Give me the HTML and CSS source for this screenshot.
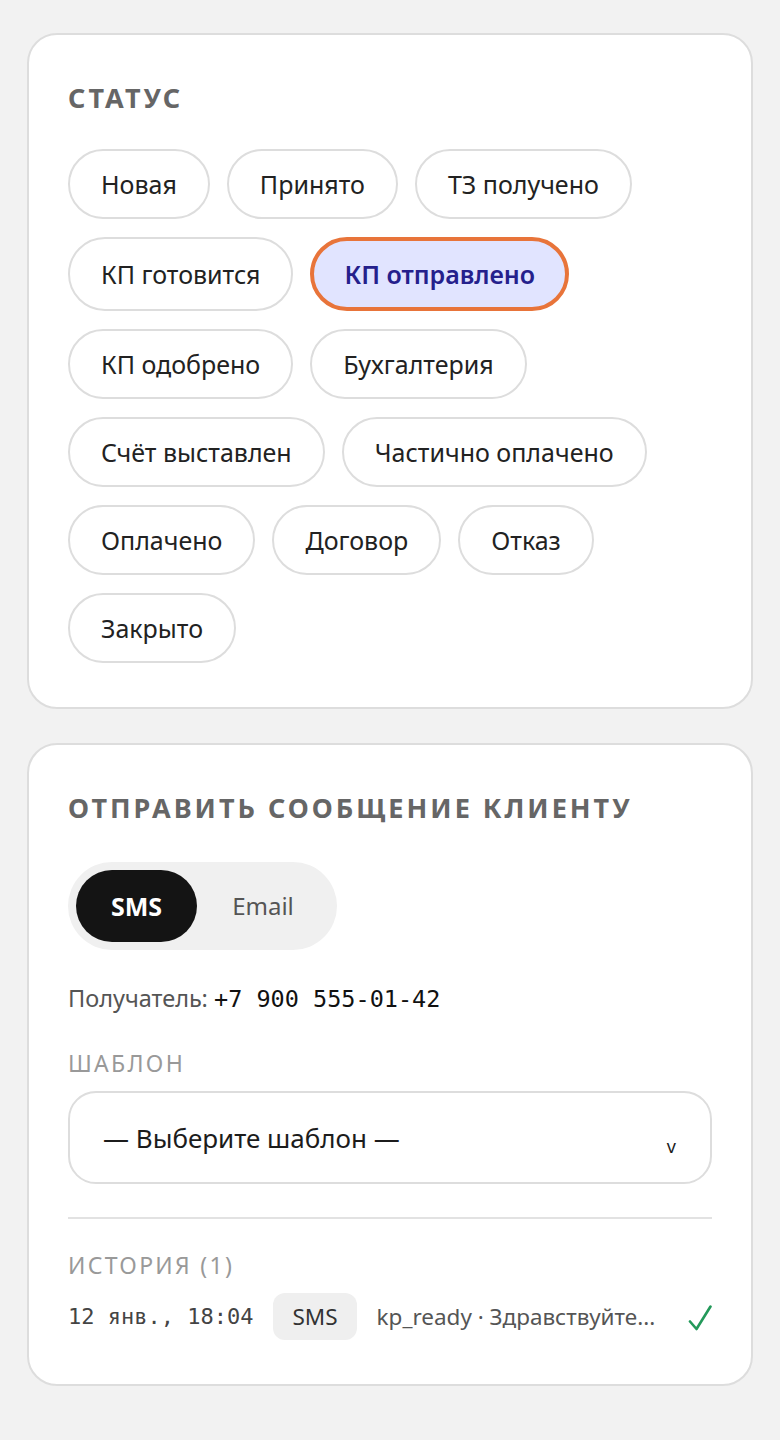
FILE: index.html
```html
<!DOCTYPE html>
<html lang="ru">
<head>
<meta charset="utf-8">
<title>Заявка</title>
<link rel="stylesheet" href="styles.css">
</head>
<body>
<main class="page">
  <section class="card">
    <h2 class="card-title">Статус</h2>
    <div class="chips">
      <button class="chip">Новая</button>
      <button class="chip">Принято</button>
      <button class="chip">ТЗ получено</button>
      <button class="chip">КП готовится</button>
      <button class="chip chip-active">КП отправлено</button>
      <button class="chip">КП одобрено</button>
      <button class="chip">Бухгалтерия</button>
      <button class="chip">Счёт выставлен</button>
      <button class="chip">Частично оплачено</button>
      <button class="chip">Оплачено</button>
      <button class="chip">Договор</button>
      <button class="chip">Отказ</button>
      <button class="chip">Закрыто</button>
    </div>
  </section>

  <section class="card">
    <h2 class="card-title">Отправить сообщение клиенту</h2>
    <div class="segmented">
      <button class="seg seg-on">SMS</button>
      <button class="seg">Email</button>
    </div>
    <p class="recipient">Получатель: <span class="mono phone">+7 900 555-01-42</span></p>
    <div class="field-label field-label-first">Шаблон</div>
    <div class="select">
      <span class="select-text">— Выберите шаблон —</span>
      <span class="select-caret">v</span>
    </div>
    <hr class="divider">
    <div class="field-label">История (1)</div>
    <div class="history-row">
      <span class="mono history-date">12 янв., 18:04</span>
      <span class="tag">SMS</span>
      <span class="history-text">kp_ready · Здравствуйте...</span>
      <svg class="history-ok" width="24" height="26" viewBox="0 0 24 26" aria-label="Доставлено">
        <path d="M2 16.5 L8.5 24 L22.5 1.5" fill="none" stroke="#23995a" stroke-width="2.6" stroke-linecap="round" stroke-linejoin="round"/>
      </svg>
    </div>
  </section>
</main>
</body>
</html>
```

FILE: styles.css
```css
html, body {
  margin: 0;
  padding: 0;
  background: #f2f2f2;
}

body {
  font-family: "Noto Sans", "Open Sans", sans-serif;
  color: #1c1c1c;
}

.page {
  display: flex;
  flex-direction: column;
  gap: 34px;
  padding: 33px 27px;
}

.card {
  display: flex;
  flex-direction: column;
  background: #ffffff;
  border: 2px solid #dddddd;
  border-radius: 30px;
  padding: 45px 39px 44px;
}

.card-title {
  margin: 0 0 33px;
  font-size: 27px;
  line-height: 36px;
  font-weight: 700;
  letter-spacing: 3px;
  text-transform: uppercase;
  color: #666666;
}

/* status chips */
.chips {
  display: flex;
  flex-wrap: wrap;
  gap: 18px 17px;
}

.chip {
  font-family: inherit;
  font-size: 25px;
  line-height: 32px;
  color: #222222;
  background: #ffffff;
  border: 2px solid #dddddd;
  border-radius: 999px;
  padding: 17px 31px;
  cursor: pointer;
}

.chip-active {
  background: #e1e4ff;
  border: 4px solid #e8743a;
  padding: 17px 30px;
  color: #25208c;
  font-weight: 600;
}

/* channel switch */
.segmented {
  display: inline-flex;
  align-self: flex-start;
  background: #f0f0f0;
  border-radius: 999px;
  padding: 8px;
  margin-top: 3px;
}

.seg {
  font-family: inherit;
  font-size: 24px;
  line-height: 32px;
  border: none;
  background: transparent;
  color: #555555;
  border-radius: 999px;
  padding: 20px 35px;
  cursor: pointer;
}

.seg-on {
  background: #141414;
  color: #ffffff;
  font-weight: 700;
  font-size: 25px;
  padding: 20px 35px;
}

.recipient {
  margin: 32px 0 0;
  font-size: 23.5px;
  line-height: 32px;
  color: #555555;
}

.mono {
  font-family: "DejaVu Sans Mono", "Liberation Mono", monospace;
}

.phone {
  color: #111111;
  font-size: 23.5px;
}

.field-label {
  margin-top: 32px;
  font-size: 23px;
  line-height: 28px;
  letter-spacing: 2.3px;
  text-transform: uppercase;
  color: #999999;
}

.field-label-first {
  margin-top: 34px;
}

.select {
  display: flex;
  align-items: center;
  justify-content: space-between;
  margin-top: 14px;
  height: 89px;
  border: 2px solid #dddddd;
  border-radius: 28px;
  padding: 0 34px 0 33px;
}

.select-text {
  font-size: 26px;
  color: #1c1c1c;
}

.select-caret {
  font-size: 18px;
  color: #1c1c1c;
  margin-top: 16px;
}

.divider {
  width: 100%;
  border: none;
  border-top: 2px solid #e2e2e2;
  margin: 33px 0 0;
}

.history-row {
  display: flex;
  align-items: center;
  gap: 20px;
  margin-top: 14px;
}

.history-date {
  font-size: 22px;
  color: #444444;
}

.tag {
  background: #efefef;
  border-radius: 12px;
  padding: 8px 19px;
  font-size: 22.5px;
  line-height: 31px;
  color: #333333;
}

.history-text {
  flex: 1;
  font-size: 22.5px;
  color: #555555;
  white-space: nowrap;
  overflow: hidden;
  text-overflow: ellipsis;
}

.history-ok {
  flex: none;
  margin-top: 2px;
}
```
